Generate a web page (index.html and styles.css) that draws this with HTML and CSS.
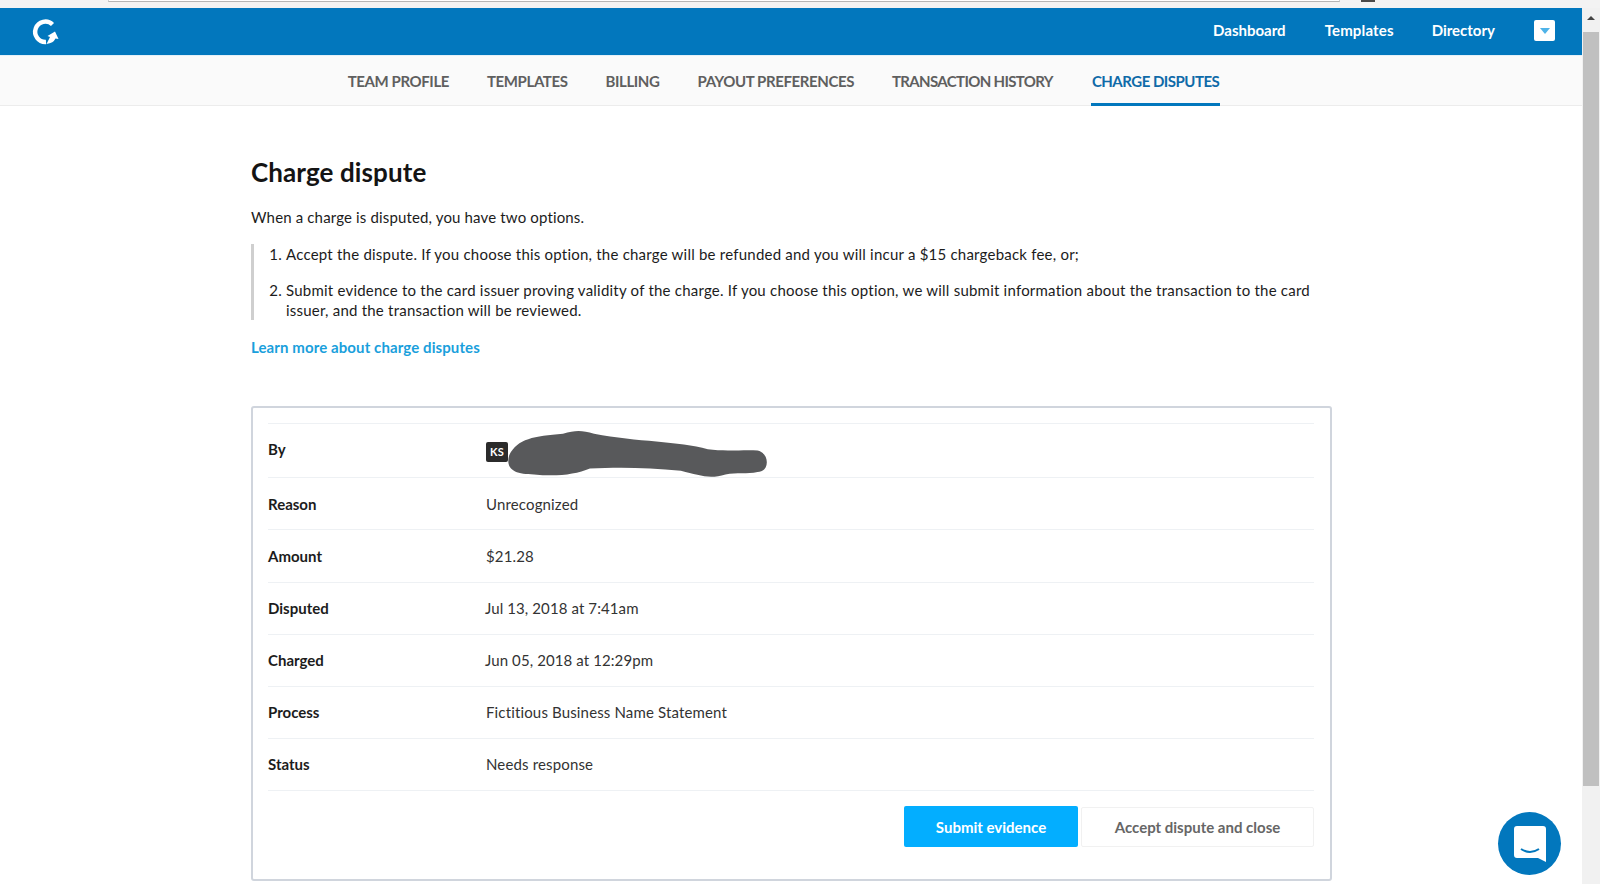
FILE: index.html
```html
<!DOCTYPE html>
<html lang="en">
<head>
<meta charset="utf-8">
<title>Charge dispute</title>
<link rel="stylesheet" href="styles.css">
</head>
<body>
<div class="chrome">
  <div class="urlbar"></div>
  <div class="chrome-tab"></div>
</div>
<div class="viewport">
  <div class="page">
    <header class="topbar">
      <svg class="logo" viewBox="0 0 28 28" width="28" height="28" aria-hidden="true">
        <path d="M21.5 6.5A10.2 10.2 0 1 0 15 24" fill="none" stroke="#fff" stroke-width="4.4"/>
        <path d="M15.5 26 L19 19 L16.5 18 L24 13.5 L27.5 21 L24.5 20.5 Q22.5 25 15.5 26Z" fill="#fff"/>
      </svg>
      <nav class="topnav">
        <a>Dashboard</a>
        <a>Templates</a>
        <a>Directory</a>
        <span class="menu-btn"><span class="caret"></span></span>
      </nav>
    </header>
    <nav class="subnav">
      <a>TEAM PROFILE</a>
      <a>TEMPLATES</a>
      <a>BILLING</a>
      <a>PAYOUT PREFERENCES</a>
      <a class="tight">TRANSACTION HISTORY</a>
      <a class="active">CHARGE DISPUTES</a>
    </nav>
    <main class="content">
      <h1>Charge dispute</h1>
      <p class="intro">When a charge is disputed, you have two options.</p>
      <ol class="options">
        <li>Accept the dispute. If you choose this option, the charge will be refunded and you will incur a $15 chargeback fee, or;</li>
        <li>Submit evidence to the card issuer proving validity of the charge. If you choose this option, we will submit information about the transaction to the card issuer, and the transaction will be reviewed.</li>
      </ol>
      <a class="learn">Learn more about charge disputes</a>
      <section class="card">
        <div class="row row-by">
          <span class="label">By</span>
          <span class="value by-value">
            <span class="avatar">KS</span>
            <svg class="scribble" viewBox="0 0 260 46" width="269" height="55" preserveAspectRatio="none" aria-hidden="true">
              <path d="M6 22 C14 8 30 6 58 4 C70 1 76 1 88 4 C130 11 170 10 198 17 C215 19 235 17 246 18 C258 20 258 36 246 36 C236 38 226 36 215 38 C200 42 190 39 172 35 C140 32 110 32 84 33 C70 38 52 40 30 38 C12 38 2 34 6 22Z" fill="#58595b"/>
            </svg>
          </span>
        </div>
        <div class="row"><span class="label">Reason</span><span class="value">Unrecognized</span></div>
        <div class="row"><span class="label">Amount</span><span class="value">$21.28</span></div>
        <div class="row lifted"><span class="label">Disputed</span><span class="value date">Jul 13, 2018 at 7:41am</span></div>
        <div class="row lifted"><span class="label">Charged</span><span class="value date">Jun 05, 2018 at 12:29pm</span></div>
        <div class="row lifted"><span class="label">Process</span><span class="value">Fictitious Business Name Statement</span></div>
        <div class="row lifted"><span class="label">Status</span><span class="value">Needs response</span></div>
        <div class="actions">
          <button class="btn primary" type="button">Submit evidence</button>
          <button class="btn secondary" type="button">Accept dispute and close</button>
        </div>
      </section>
    </main>
  </div>
  <div class="scrollbar">
    <span class="scroll-arrow"></span>
    <span class="scroll-thumb"></span>
  </div>
</div>
<div class="chat">
  <svg viewBox="0 0 32 36" width="32" height="36" aria-hidden="true">
    <path d="M3 0H29Q32 0 32 3V36L24 32H3Q0 32 0 29V3Q0 0 3 0Z" fill="#fff"/>
    <path d="M7 23Q16 29 25 23" fill="none" stroke="#0277bd" stroke-width="2"/>
  </svg>
</div>
</body>
</html>
```
FILE: styles.css
```css
* { box-sizing: border-box; }
html, body { margin: 0; height: 884px; overflow: hidden; }
body {
  font-family: "Lato", "Noto Sans", sans-serif;
  font-size: 15px;
  color: #1c1c1c;
  background: #fff;
}
.chrome {
  height: 8px;
  background: #f3f3f3;
  display: flex;
  align-items: flex-start;
  padding-left: 108px;
}
.urlbar {
  width: 1232px;
  height: 2px;
  background: #fff;
  border-bottom: 1px solid #b5b5b5;
  border-left: 1px solid #d0d0d0;
  border-right: 1px solid #d0d0d0;
}
.chrome-tab {
  width: 14px;
  height: 2px;
  margin-left: 21px;
  background: #4a4a4a;
}
.viewport { display: flex; height: 876px; }
.page { flex: 1; min-width: 0; }
.topbar {
  height: 47px;
  background: #0277bd;
  display: flex;
  align-items: center;
  justify-content: space-between;
  padding: 0 27px 0 31px;
}
.logo { display: block; }
.topnav { display: flex; align-items: center; padding-bottom: 2px; }
.topnav a {
  color: #fff;
  font-weight: 700;
  font-size: 15px;
  margin-right: 39px;
  padding-bottom: 2px;
}
.topnav a:nth-child(2) { letter-spacing: .15px; margin-right: 38px; }
.menu-btn {
  width: 21px;
  height: 21px;
  background: #fff;
  border-radius: 2px;
  display: flex;
  align-items: center;
  justify-content: center;
}
.caret {
  width: 0;
  height: 0;
  border-left: 5px solid transparent;
  border-right: 5px solid transparent;
  border-top: 6px solid #4fb3e8;
}
.subnav {
  height: 51px;
  background: #fafafa;
  border-top: 1px solid #e3f0f8;
  border-bottom: 1px solid #ececec;
  display: flex;
  justify-content: center;
  gap: 38px;
  padding-right: 14px;
}
.subnav a {
  color: #5f5f5f;
  font-weight: 700;
  font-size: 15px;
  letter-spacing: -.4px;
  line-height: 50px;
  height: 50px;
}
.subnav a.tight { letter-spacing: -.65px; }
.subnav a.active {
  color: #0f6aa8;
  border-bottom: 3px solid #0277bd;
  letter-spacing: -.5px;
  padding: 0 1px;
}
.content { width: 1081px; margin-left: 251px; }
h1 {
  margin: 0;
  padding-top: 50px;
  font-size: 26px;
  line-height: 32px;
  font-weight: 700;
  letter-spacing: .1px;
  color: #141414;
}
.intro { margin: 19px 0 0; line-height: 20px; letter-spacing: .15px; }
.options {
  margin: 17px 0 0;
  padding: 0 0 0 32px;
  border-left: 3px solid #cfcfcf;
  width: 1060px;
  letter-spacing: .22px;
}
.options li { line-height: 20px; }
.options li + li { margin-top: 16px; }
.learn {
  display: block;
  margin-top: 17px;
  font-weight: 700;
  line-height: 20px;
  letter-spacing: .1px;
  color: #1a9fdc;
}
.card {
  margin-top: 49px;
  height: 475px;
  border: 2px solid #d0d5dd;
  border-radius: 3px;
  padding: 15px 16px 0 15px;
}
.row {
  display: flex;
  align-items: center;
  height: 52px;
  border-top: 1px solid #eef1f4;
}
.row-by { height: 54px; }
.row-by .label { padding-bottom: 3px; }
.row:nth-child(3) { height: 53px; }
.lifted { padding-bottom: 2px; }
.label { width: 218px; font-weight: 700; color: #1c1c1c; }
.value { color: #333; letter-spacing: .15px; }
.date { margin-left: -1px; letter-spacing: .1px; }
.by-value { position: relative; display: flex; align-items: center; }
.avatar {
  width: 22px;
  height: 20px;
  margin-top: 2px;
  background: #2b2b2b;
  border-radius: 2px;
  color: #fff;
  font-size: 11px;
  font-weight: 700;
  display: flex;
  align-items: center;
  justify-content: center;
}
.scribble { position: absolute; left: 17px; top: -11px; }
.actions {
  border-top: 1px solid #eef1f4;
  display: flex;
  justify-content: flex-end;
  align-items: center;
  gap: 3px;
  padding-top: 15px;
}
.btn {
  font: 700 15px "Lato", "Noto Sans", sans-serif;
  border-radius: 2px;
  height: 41px;
  padding: 0;
}
.primary { width: 174px; background: #03aeff; color: #fff; border: 0; }
.secondary { width: 233px; height: 40px; background: #fff; color: #666; border: 1px solid #f1f1f1; }
.scrollbar {
  width: 18px;
  background: #f1f1f1;
  padding: 0 1px;
  display: flex;
  flex-direction: column;
}
.scroll-arrow {
  height: 24px;
  position: relative;
}
.scroll-arrow::after {
  content: "";
  position: absolute;
  left: 4px;
  top: 8px;
  border-left: 4px solid transparent;
  border-right: 4px solid transparent;
  border-bottom: 4px solid #444;
}
.scroll-thumb { height: 754px; background: #c0c0c0; }
.chat {
  position: absolute;
  left: 1498px;
  top: 812px;
  width: 63px;
  height: 63px;
  border-radius: 50%;
  background: #0277bd;
  display: flex;
  align-items: center;
  justify-content: center;
}
```
